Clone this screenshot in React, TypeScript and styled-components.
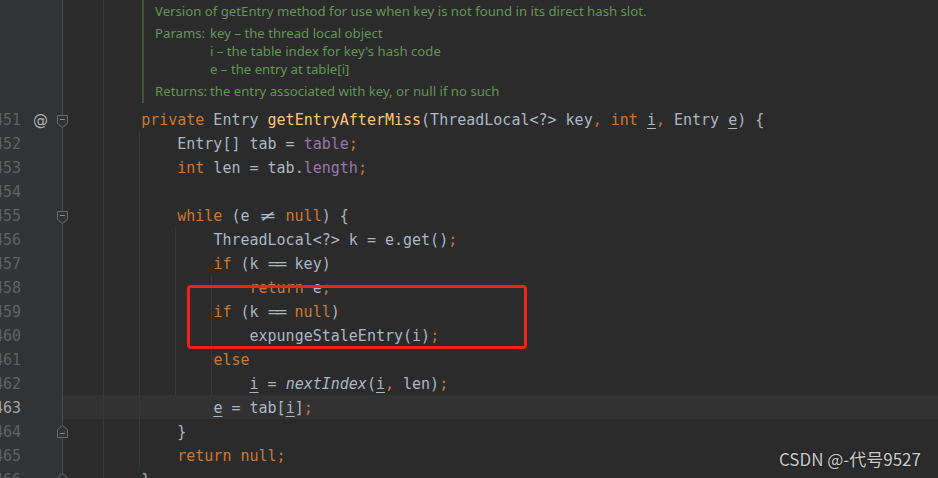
import React from 'react';
import styled, { createGlobalStyle, css } from 'styled-components';

const C = {
  bg: '#2b2b2b',
  gutter: '#313335',
  current: '#323232',
  text: '#a9b7c6',
  kw: '#cc7832',
  fn: '#ffc66d',
  field: '#9876aa',
  lineNo: '#606366',
  lineNoCur: '#a4a3a3',
  guide: '#393939',
  fold: '#4e4e4e',
  doc: '#629755',
  docBorder: '#3d5a31',
  red: '#f0211a',
};

const MONO = `"DejaVu Sans Mono", "Liberation Mono", monospace`;

const GlobalStyle = createGlobalStyle`
  html, body { margin: 0; padding: 0; }
  body { background: ${C.bg}; overflow: hidden; }
`;

const vline = (x: number, c: string) =>
  `linear-gradient(to right, transparent ${x}px, ${c} ${x}px, ${c} ${x + 1}px, transparent ${x + 1}px)`;

const rowBg = (guides: number[]) =>
  [
    vline(62, C.fold),
    ...guides.map((g) => vline(g, C.guide)),
    `linear-gradient(to right, ${C.gutter} 62px, transparent 62px)`,
  ].join(', ');

const Editor = styled.div`
  position: relative;
  width: 938px;
  height: 478px;
  overflow: hidden;
  background: ${C.bg};
  display: flex;
  flex-direction: column;
`;

const Row = styled.div<{ $guides: number[]; $current?: boolean; $h?: number }>`
  display: grid;
  grid-template-columns: 21px 12px 14px 9px 12px 1fr;
  grid-template-areas: 'num . icon . fold code';
  height: ${(p) => p.$h ?? 24}px;
  flex: none;
  background-color: ${(p) => (p.$current ? C.current : 'transparent')};
  background-image: ${(p) => rowBg(p.$guides)};
`;

const LineNo = styled.span<{ $current?: boolean }>`
  grid-area: num;
  display: flex;
  justify-content: flex-end;
  white-space: nowrap;
  padding-top: 1px;
  font: 15px/24px ${MONO};
  color: ${(p) => (p.$current ? C.lineNoCur : C.lineNo)};
`;

const GutterIcon = styled.span`
  grid-area: icon;
  text-align: center;
  padding-top: 1px;
  font: 15px/24px 'DejaVu Sans', sans-serif;
  color: #afb1b3;
`;

const FoldCell = styled.span<{ $up?: boolean }>`
  grid-area: fold;
  align-self: start;
  margin-top: ${(p) => (p.$up ? 6 : 8)}px;
  padding-left: 1px;
  display: flex;
`;

const Code = styled.div`
  grid-area: code;
  padding: 1px 0 0 37px;
  font: 15px/24px ${MONO};
  white-space: pre;
  color: ${C.text};
`;

type Kind = 'p' | 'k' | 'f' | 'd' | 'i' | 'u' | 'ne' | 'eq';
type Tok = [Kind, string];

const colorOf = (k: Kind) => {
  switch (k) {
    case 'k':
      return C.kw;
    case 'f':
      return C.fn;
    case 'd':
      return C.field;
    default:
      return C.text;
  }
};

const Tk = styled.span<{ $k: Kind }>`
  color: ${(p) => colorOf(p.$k)};
  font-style: ${(p) => (p.$k === 'i' ? 'italic' : 'normal')};
  ${(p) =>
    p.$k === 'u' &&
    css`
      text-decoration: underline;
      text-underline-offset: 3px;
      text-decoration-thickness: 1px;
    `}
`;

const Lig = styled.span`
  display: inline-block;
  width: 18px;
  text-align: center;
  vertical-align: top;
`;

const LigNe = styled.span`
  display: inline-block;
  transform: scaleX(1.7);
`;

const LigEq = styled.span`
  display: inline-block;
  letter-spacing: -3px;
  transform: translateX(-1.5px) scaleX(1.3);
`;

const DocBody = styled.div`
  grid-area: code;
  margin-left: 74px;
  height: 103px;
  box-sizing: border-box;
  border-left: 2px solid ${C.docBorder};
  padding: 2px 0 0 11px;
  font-family: 'Noto Sans', 'Open Sans', sans-serif;
  font-size: 13.2px;
  line-height: 18px;
  color: ${C.doc};
  white-space: nowrap;
`;

const DocSection = styled.div`
  display: grid;
  grid-template-columns: 55px 1fr;
  margin-top: 4px;
`;

const DocLabel = styled.span``;

const DocValues = styled.div`
  display: flex;
  flex-direction: column;
`;

const Highlight = styled.div`
  position: absolute;
  left: 187px;
  top: 285px;
  width: 340px;
  height: 64px;
  box-sizing: border-box;
  border: 3px solid ${C.red};
  border-radius: 4px;
  pointer-events: none;
`;

const Watermark = styled.div`
  position: absolute;
  right: 17px;
  bottom: 9px;
  font-family: 'Noto Sans CJK SC', 'Noto Sans', sans-serif;
  font-size: 17px;
  line-height: 20px;
  color: #cbcbcb;
  text-shadow: 0 0 2px rgba(0, 0, 0, 0.6);
  white-space: nowrap;
`;

const FoldDown = () => (
  <svg width="11" height="13" viewBox="0 0 11 13">
    <path d="M0.5 0.5 H10.5 V8.5 L5.5 12.5 L0.5 8.5 Z" fill={C.gutter} stroke="#6b6b6b" />
    <path d="M3 4.5 H8" stroke="#8a8a8a" />
  </svg>
);

const FoldUp = () => (
  <svg width="11" height="13" viewBox="0 0 11 13">
    <path d="M0.5 4.5 L5.5 0.5 L10.5 4.5 V12.5 H0.5 Z" fill={C.gutter} stroke="#6b6b6b" />
    <path d="M3 8.5 H8" stroke="#8a8a8a" />
  </svg>
);

interface LineDef {
  n: number;
  indent: number;
  toks: Tok[];
  guides: number[];
  fold?: 'down' | 'up';
  icon?: boolean;
  current?: boolean;
}

const G1 = [103];
const G2 = [103, 139];
const G3 = [103, 139, 175];
const G4 = [103, 139, 175, 211];

const LINES: LineDef[] = [
  {
    n: 451,
    indent: 4,
    icon: true,
    fold: 'down',
    guides: G1,
    toks: [
      ['k', 'private'],
      ['p', ' Entry '],
      ['f', 'getEntryAfterMiss'],
      ['p', '(ThreadLocal<?> key'],
      ['k', ', int '],
      ['u', 'i'],
      ['k', ', '],
      ['p', 'Entry '],
      ['u', 'e'],
      ['p', ') {'],
    ],
  },
  { n: 452, indent: 8, guides: G2, toks: [['p', 'Entry[] tab = '], ['d', 'table'], ['k', ';']] },
  { n: 453, indent: 8, guides: G2, toks: [['k', 'int'], ['p', ' len = tab.'], ['d', 'length'], ['k', ';']] },
  { n: 454, indent: 0, guides: G2, toks: [] },
  {
    n: 455,
    indent: 8,
    fold: 'down',
    guides: G2,
    toks: [['k', 'while'], ['p', ' (e '], ['ne', '≠'], ['p', ' '], ['k', 'null'], ['p', ') {']],
  },
  { n: 456, indent: 12, guides: G3, toks: [['p', 'ThreadLocal<?> k = e.get()'], ['k', ';']] },
  { n: 457, indent: 12, guides: G3, toks: [['k', 'if'], ['p', ' (k '], ['eq', '=='], ['p', ' key)']] },
  { n: 458, indent: 16, guides: G4, toks: [['k', 'return'], ['p', ' e'], ['k', ';']] },
  {
    n: 459,
    indent: 12,
    guides: G4,
    toks: [['k', 'if'], ['p', ' (k '], ['eq', '=='], ['p', ' '], ['k', 'null'], ['p', ')']],
  },
  { n: 460, indent: 16, guides: G4, toks: [['p', 'expungeStaleEntry(i)'], ['k', ';']] },
  { n: 461, indent: 12, guides: G4, toks: [['k', 'else']] },
  {
    n: 462,
    indent: 16,
    guides: G4,
    toks: [
      ['u', 'i'],
      ['p', ' = '],
      ['i', 'nextIndex'],
      ['p', '('],
      ['u', 'i'],
      ['k', ', '],
      ['p', 'len)'],
      ['k', ';'],
    ],
  },
  {
    n: 463,
    indent: 12,
    current: true,
    guides: G2,
    toks: [['u', 'e'], ['p', ' = tab['], ['u', 'i'], ['p', ']'], ['k', ';']],
  },
  { n: 464, indent: 8, fold: 'up', guides: G2, toks: [['p', '}']] },
  { n: 465, indent: 8, guides: G2, toks: [['k', 'return'], ['p', ' '], ['k', 'null'], ['k', ';']] },
  { n: 466, indent: 4, fold: 'up', guides: G1, toks: [['p', '}']] },
];

const renderTok = ([k, t]: Tok, i: number) => {
  if (k === 'ne')
    return (
      <Lig key={i}>
        <LigNe>{t}</LigNe>
      </Lig>
    );
  if (k === 'eq')
    return (
      <Lig key={i}>
        <LigEq>{t}</LigEq>
      </Lig>
    );
  return (
    <Tk key={i} $k={k}>
      {t}
    </Tk>
  );
};

export default function App() {
  return (
    <>
      <GlobalStyle />
      <Editor>
        <Row $guides={G1} $h={107}>
          <DocBody>
            <div>Version of getEntry method for use when key is not found in its direct hash slot.</div>
            <DocSection>
              <DocLabel>Params:</DocLabel>
              <DocValues>
                <span>key – the thread local object</span>
                <span>i – the table index for key's hash code</span>
                <span>e – the entry at table[i]</span>
              </DocValues>
            </DocSection>
            <DocSection>
              <DocLabel>Returns:</DocLabel>
              <DocValues>
                <span>the entry associated with key, or null if no such</span>
              </DocValues>
            </DocSection>
          </DocBody>
        </Row>
        {LINES.map((l) => (
          <Row key={l.n} $guides={l.guides} $current={l.current}>
            <LineNo $current={l.current}>{l.n}</LineNo>
            {l.icon && <GutterIcon>@</GutterIcon>}
            {l.fold && <FoldCell $up={l.fold === 'up'}>{l.fold === 'up' ? <FoldUp /> : <FoldDown />}</FoldCell>}
            <Code>
              {' '.repeat(l.indent)}
              {l.toks.map(renderTok)}
            </Code>
          </Row>
        ))}
        <Highlight />
        <Watermark>CSDN @-代号9527</Watermark>
      </Editor>
    </>
  );
}
